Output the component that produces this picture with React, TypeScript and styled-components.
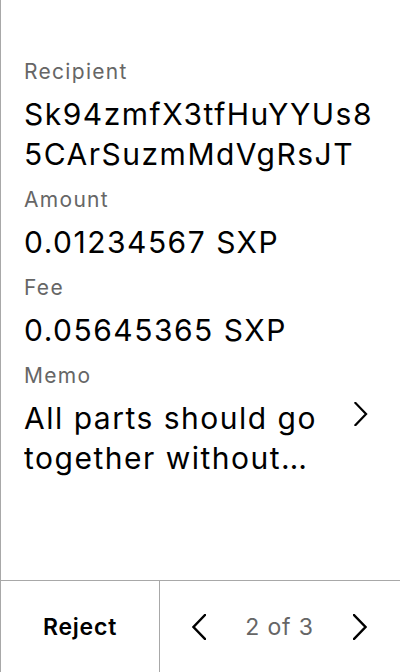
import React from 'react';
import styled, { createGlobalStyle } from 'styled-components';

const GlobalStyle = createGlobalStyle`
  html, body {
    margin: 0;
    padding: 0;
    background: #fff;
  }
  body {
    font-family: Inter, "Noto Sans", sans-serif;
    -webkit-font-smoothing: antialiased;
  }
`;

const Screen = styled.div`
  width: 400px;
  height: 672px;
  box-sizing: border-box;
  border-left: 1px solid #a8a8a8;
  display: flex;
  flex-direction: column;
  background: #fff;
  color: #000;
`;

const Details = styled.div`
  flex: 1;
  padding: 58px 20px 0 23px;
  display: flex;
  flex-direction: column;
`;

const Field = styled.div`
  display: flex;
  flex-direction: column;
  margin-bottom: 12px;
`;

const Label = styled.div`
  font-size: 21px;
  line-height: 28px;
  letter-spacing: 1.3px;
  color: #666;
  margin-bottom: 8px;
`;

const Value = styled.div`
  font-size: 30px;
  line-height: 40px;
  letter-spacing: 1.5px;
  color: #000;
  word-break: break-all;
`;

const MemoRow = styled.div`
  display: flex;
  align-items: flex-start;
  gap: 12px;
`;

const MemoText = styled(Value)`
  flex: 1;
  word-break: normal;
  display: -webkit-box;
  -webkit-line-clamp: 2;
  -webkit-box-orient: vertical;
  overflow: hidden;
`;

const MemoChevron = styled.div`
  width: 22px;
  margin-right: 4px;
  display: flex;
  justify-content: flex-start;
  padding-top: 4px;
`;

const Footer = styled.div`
  height: 92px;
  box-sizing: border-box;
  border-top: 1px solid #a8a8a8;
  display: grid;
  grid-template-columns: 159px 1fr;
`;

const RejectButton = styled.button`
  border: none;
  border-right: 1px solid #a8a8a8;
  background: transparent;
  font-family: Inter, "Noto Sans", sans-serif;
  font-weight: 600;
  font-size: 23px;
  letter-spacing: 0.8px;
  color: #000;
  padding: 0;
  cursor: pointer;
`;

const Pager = styled.div`
  display: flex;
  align-items: center;
  justify-content: space-between;
  padding: 0 33px 0 32px;
`;

const PageText = styled.span`
  font-size: 23px;
  letter-spacing: 0.8px;
  color: #666;
`;

const Chevron: React.FC<{ dir: 'left' | 'right'; height?: number }> = ({ dir, height = 26 }) => (
  <svg width="14" height={height} viewBox="0 0 14 26" fill="none">
    <path
      d={dir === 'left' ? 'M13 1 L1.5 13 L13 25' : 'M1 1 L12.5 13 L1 25'}
      stroke="#000"
      strokeWidth="2.4"
      strokeLinecap="square"
    />
  </svg>
);

export default function App() {
  return (
    <>
      <GlobalStyle />
      <Screen>
        <Details>
          <Field>
            <Label>Recipient</Label>
            <Value>Sk94zmfX3tfHuYYUs85CArSuzmMdVgRsJT</Value>
          </Field>
          <Field>
            <Label>Amount</Label>
            <Value>0.01234567 SXP</Value>
          </Field>
          <Field>
            <Label>Fee</Label>
            <Value>0.05645365 SXP</Value>
          </Field>
          <Field>
            <Label>Memo</Label>
            <MemoRow>
              <MemoText>All parts should go together without forcing, you must remember</MemoText>
              <MemoChevron>
                <Chevron dir="right" height={24} />
              </MemoChevron>
            </MemoRow>
          </Field>
        </Details>
        <Footer>
          <RejectButton>Reject</RejectButton>
          <Pager>
            <Chevron dir="left" />
            <PageText>2 of 3</PageText>
            <Chevron dir="right" />
          </Pager>
        </Footer>
      </Screen>
    </>
  );
}
